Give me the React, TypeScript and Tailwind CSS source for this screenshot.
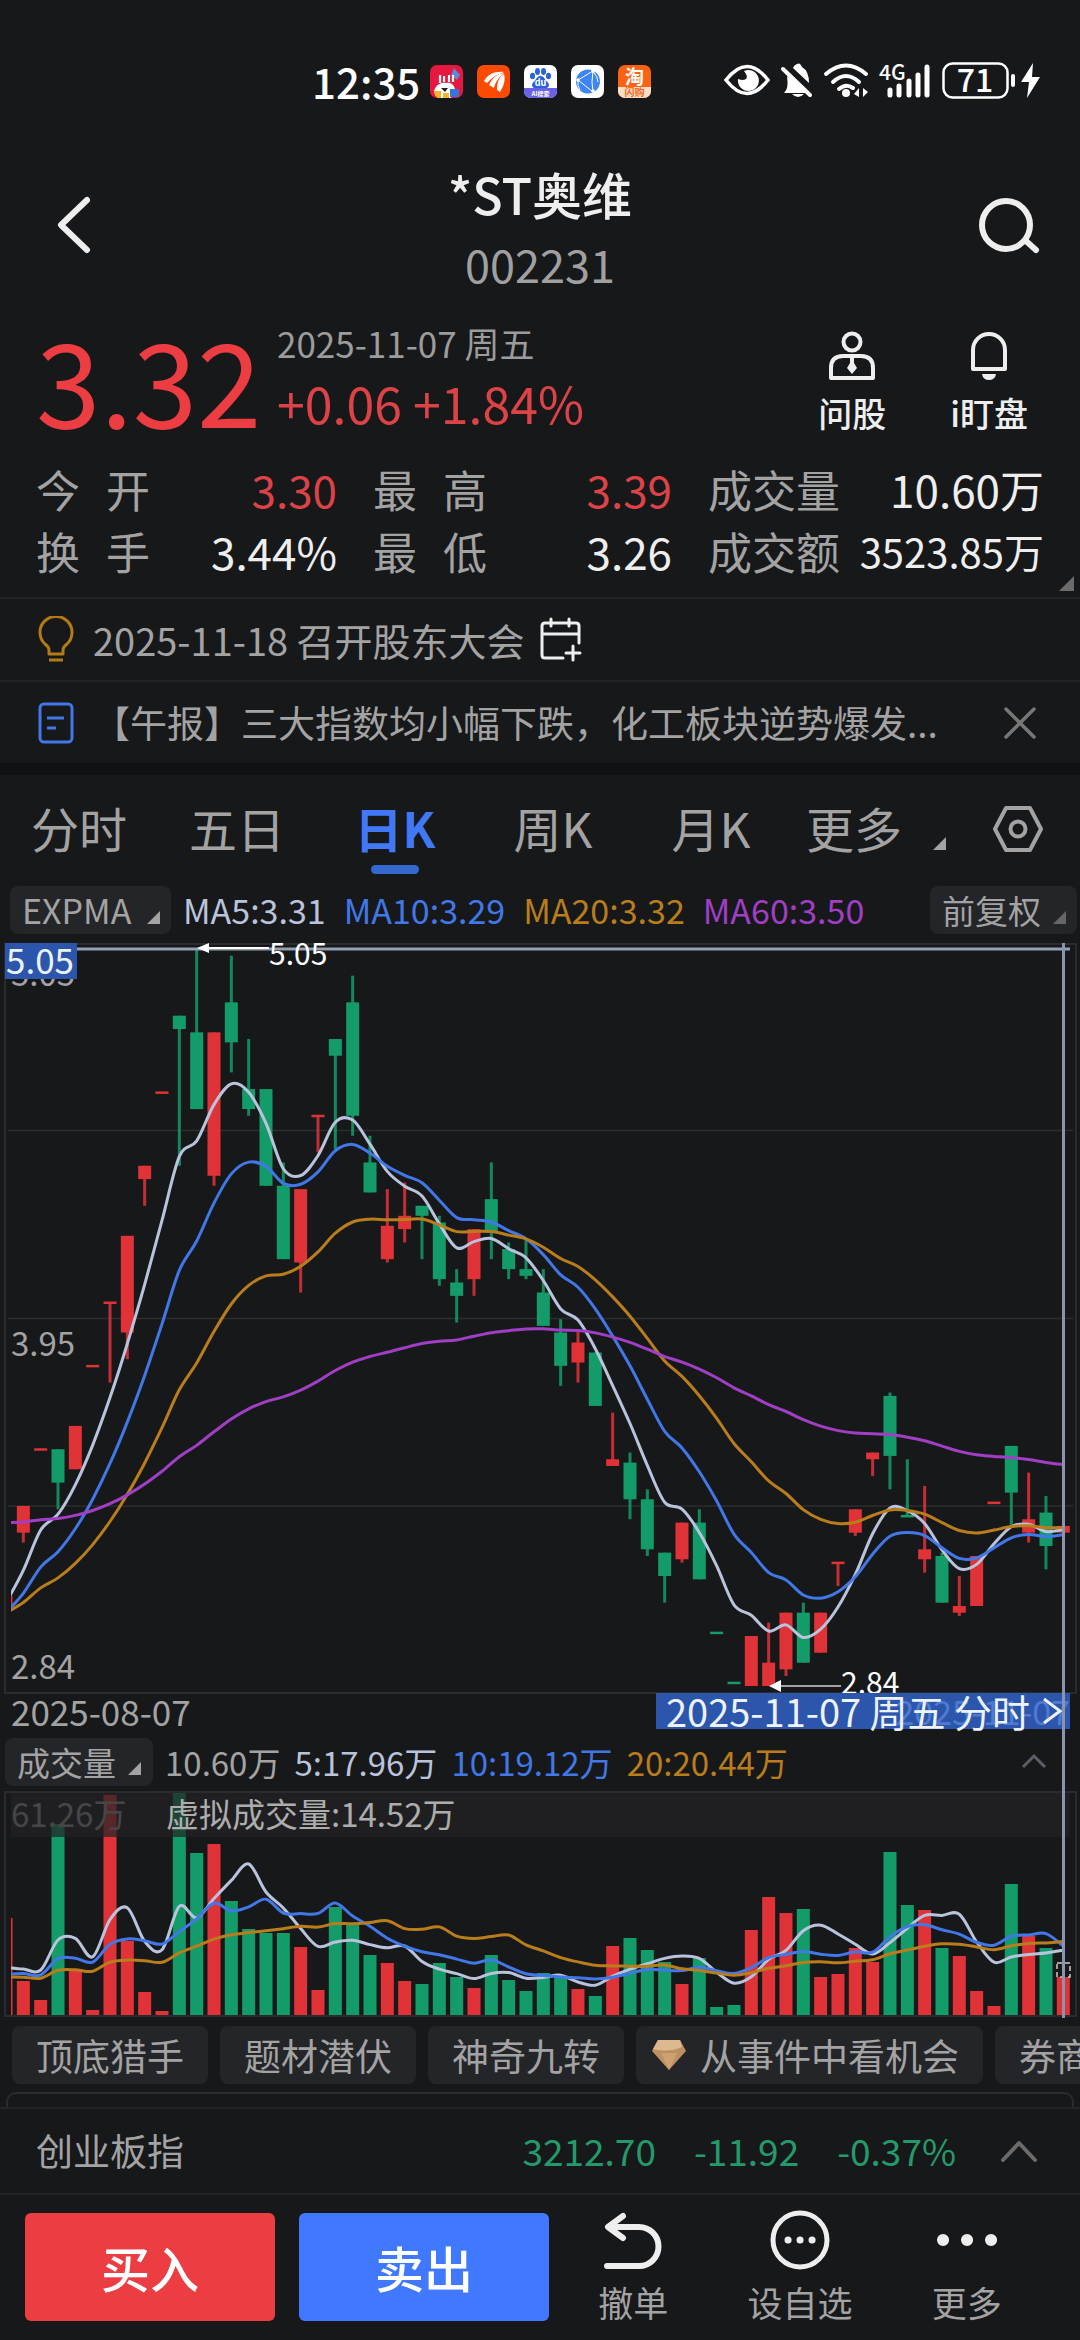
import type { ReactNode } from "react";

type Candle = { up: boolean; high: number; top: number; bottom: number; low: number };

const RED = "#e03338";
const GREEN = "#139c69";
const STEP = 17.333;
const X0 = 6;
const LEFT = 11;
const RIGHT = 1064;
const FONT = '"Noto Sans CJK SC", sans-serif';

// Prices in cents: direction, high, body top, body bottom, low
const ROWS: [string, number, number, number, number][] = [
  ["r", 322, 311, 308, 308],
  ["r", 338, 338, 330, 327],
  ["r", 355, 355, 355, 355],
  ["g", 355, 355, 345, 337],
  ["r", 362, 362, 349, 349],
  ["r", 380, 380, 380, 380],
  ["r", 399, 399, 399, 375],
  ["r", 419, 419, 390, 382],
  ["r", 440, 440, 436, 428],
  ["r", 462, 462, 462, 462],
  ["g", 485, 485, 481, 440],
  ["g", 505, 480, 457, 457],
  ["r", 480, 480, 437, 434],
  ["g", 503, 489, 477, 468],
  ["g", 478, 463, 457, 455],
  ["g", 463, 463, 434, 434],
  ["g", 441, 434, 412, 412],
  ["r", 433, 433, 411, 402],
  ["r", 455, 455, 455, 444],
  ["g", 478, 478, 473, 445],
  ["g", 497, 489, 455, 449],
  ["g", 449, 441, 432, 432],
  ["r", 433, 422, 412, 411],
  ["r", 435, 425, 421, 417],
  ["g", 428, 428, 425, 412],
  ["g", 425, 423, 406, 404],
  ["g", 409, 405, 401, 393],
  ["r", 421, 421, 406, 401],
  ["g", 441, 430, 420, 412],
  ["g", 417, 415, 409, 406],
  ["g", 418, 409, 407, 406],
  ["g", 409, 402, 392, 392],
  ["g", 394, 390, 380, 374],
  ["r", 391, 387, 381, 375],
  ["g", 384, 384, 368, 368],
  ["r", 366, 352, 350, 350],
  ["g", 354, 351, 340, 334],
  ["g", 343, 340, 325, 323],
  ["g", 324, 324, 317, 309],
  ["r", 333, 333, 322, 321],
  ["g", 337, 333, 316, 316],
  ["g", 300, 300, 300, 300],
  ["g", 285, 285, 285, 285],
  ["r", 299, 299, 284, 284],
  ["r", 303, 291, 284, 284],
  ["r", 306, 306, 289, 287],
  ["g", 309, 306, 291, 291],
  ["r", 306, 306, 294, 294],
  ["r", 321, 321, 321, 314],
  ["r", 337, 337, 330, 329],
  ["r", 354, 354, 352, 347],
  ["g", 372, 371, 353, 343],
  ["g", 352, 335, 335, 335],
  ["r", 344, 325, 322, 318],
  ["g", 324, 323, 309, 309],
  ["r", 317, 308, 306, 305],
  ["r", 323, 323, 308, 308],
  ["r", 339, 339, 339, 339],
  ["g", 356, 356, 342, 332],
  ["r", 348, 334, 330, 327],
  ["g", 341, 336, 326, 319],
  ["r", 332, 332, 330, 330],
];

const CANDLES: Candle[] = ROWS.map(([d, high, top, bottom, low]) => ({ up: d === "r", high, top, bottom, low }));
const CLOSES = CANDLES.map((c) => (c.up ? c.top : c.bottom));

// Volume bar heights in chart units
const VOLUME = [
  97, 34, 15, 191, 46, 5, 220, 74, 23, 4, 222, 162, 171, 114, 86, 82, 82, 68, 25, 108, 91, 60, 52, 34, 31, 52, 38, 27,
  60, 35, 24, 42, 38, 26, 19, 69, 77, 65, 53, 31, 57, 8, 10, 85, 118, 102, 106, 38, 41, 67, 53, 163, 110, 105, 67, 59,
  24, 9, 131, 79, 67, 38,
];
const EARLIER_VOLUME = [35, 35, 35, 35, 35, 35, 35, 35, 35, 35, 28, 28, 28, 43, 43, 42, 20, 41, 38];

const xOf = (i: number) => X0 + i * STEP;
const yOf = (price: number) => 6 + (505 - price) * 3.335;

function ema(seed: number, n: number) {
  const out = [seed];
  for (let i = 1; i < CLOSES.length; i++) out.push(out[i - 1] + ((CLOSES[i] - out[i - 1]) * 2) / (n + 1));
  return out;
}

function sma(n: number) {
  const all = [...EARLIER_VOLUME, ...VOLUME];
  return VOLUME.map((_, i) => {
    const end = i + EARLIER_VOLUME.length + 1;
    return all.slice(end - n, end).reduce((a, b) => a + b, 0) / n;
  });
}

function smoothPath(points: [number, number][]) {
  let d = `M${points[0][0]} ${points[0][1].toFixed(1)}`;
  for (let i = 0; i < points.length - 1; i++) {
    const p0 = points[Math.max(i - 1, 0)];
    const p1 = points[i];
    const p2 = points[i + 1];
    const p3 = points[Math.min(i + 2, points.length - 1)];
    d += ` C${(p1[0] + (p2[0] - p0[0]) / 6).toFixed(1)} ${(p1[1] + (p2[1] - p0[1]) / 6).toFixed(1)} ${(p2[0] - (p3[0] - p1[0]) / 6).toFixed(1)} ${(p2[1] - (p3[1] - p1[1]) / 6).toFixed(1)} ${p2[0].toFixed(1)} ${p2[1].toFixed(1)}`;
  }
  return d;
}

const priceLine = (seed: number, n: number) => smoothPath(ema(seed, n).map((p, i) => [xOf(i), yOf(p)]));
const volumeLine = (n: number) => smoothPath(sma(n).map((v, i) => [xOf(i), 224 - v]));

function Corner({ className = "" }: { className?: string }) {
  return (
    <svg viewBox="0 0 12 12" className={className} aria-hidden="true">
      <path d="M12 0V12H0Z" fill="currentColor" />
    </svg>
  );
}

function StatusBar() {
  return (
    <div className="flex h-[162px] items-center pr-[30px] pl-[312px] text-white">
      <span className="text-[42px] leading-none font-medium">12:35</span>
      <div className="ml-[10px] flex gap-[14px]">
        <svg viewBox="0 0 33 33" className="size-[33px]">
          <rect width="33" height="33" rx="7" fill="#e8173f" />
          <path d="M24 3l6 7-3 5-6-5z" fill="#5b8bd6" />
          <path d="M10 10v8M14 11v6M19 10v7M23 10v7" stroke="#fff" strokeWidth="2.2" />
          <path d="M4 26c2-7 8-9 12-8 5-1 8 2 9 6l-4 9H8z" fill="#fff" />
          <path d="M11 23h7l-3 4z" fill="#222" />
          <path d="M4 26h7v7H8q-4-2-4-7zM13 28h6v5h-6z" fill="#f4b62b" />
          <path d="M20 24h9v8h-9z" fill="#3774d8" />
        </svg>
        <svg viewBox="0 0 33 33" className="size-[33px]">
          <rect width="33" height="33" rx="7" fill="#fd4a02" />
          <path d="M7 16C11 9 18 6 27 7 18 10 14 14 10 18zM12 20C15 13 20 9 27 8 21 13 18 18 17 23zM20 25C20 17 22 12 27 9 29 16 26 22 23 27z" fill="#fff" />
        </svg>
        <svg viewBox="0 0 33 33" className="size-[33px] overflow-visible">
          <rect width="33" height="33" rx="7" fill="#fff" />
          <path d="M0 23H33V26a7 7 0 0 1-7 7H7a7 7 0 0 1-7-7z" fill="#6a61e8" />
          <g fill="#2a62dc">
            <ellipse cx="8.500" cy="11" rx="2.500" ry="3.300" />
            <ellipse cx="13.500" cy="6.500" rx="2.500" ry="3.400" />
            <ellipse cx="19.500" cy="6.500" rx="2.500" ry="3.400" />
            <ellipse cx="24.500" cy="11" rx="2.500" ry="3.300" />
            <path d="M16.500 11c4 0 4 4 7 6 3 3 1 7-3 6h-8c-4 1-6-3-3-6 3-2 3-6 7-6z" />
          </g>
          <text x="16.500" y="21" fontSize="9" fontWeight="700" textAnchor="middle" fill="#fff">du</text>
          <text x="16.500" y="31" fontSize="6" fontWeight="700" textAnchor="middle" fill="#fff">AI搜索</text>
        </svg>
        <svg viewBox="0 0 33 33" className="size-[33px]">
          <rect width="33" height="33" rx="7" fill="#fff" />
          <circle cx="17" cy="16.500" r="12" fill="#3d84f5" />
          <g stroke="#fff" strokeWidth="1" fill="none">
            <path d="M7 15L22 6Q20 17 22 27L7 15M22 6q5 6 5 11M7 15q-1 6 2 10" />
          </g>
          <g fill="#fff">
            <circle cx="7" cy="15" r="1.800" />
            <circle cx="22" cy="6" r="1.800" />
            <circle cx="22" cy="26" r="1.800" />
          </g>
        </svg>
        <svg viewBox="0 0 33 33" className="size-[33px] overflow-visible">
          <rect width="33" height="33" rx="7" fill="#fb6312" />
          <path d="M0 22H33V26a7 7 0 0 1-7 7H7a7 7 0 0 1-7-7z" fill="#ffdcc4" />
          <text x="16.500" y="19" fontSize="19" fontWeight="700" textAnchor="middle" fill="#fff">淘</text>
          <text x="16.500" y="31" fontSize="10" fontWeight="700" textAnchor="middle" fill="#f26a1c">闪购</text>
        </svg>
      </div>
      <svg viewBox="716 56 334 50" className="ml-auto h-[50px] w-[334px] overflow-visible" fill="none" stroke="#fff" aria-label="状态图标">
        <path d="M726 80Q747 53 768 80Q747 107 726 80Z" strokeWidth="3.500" />
        <path d="M744 71C750 78 746 82 738 79A10.500 10.500 0 1 0 744 71Z" fill="#fff" stroke="none" />
        <path d="M787 76L808 93H784Q789 89 787 76ZM793 68Q794 65 797 64Q800 62 802 67Q809 71 809 83Z" fill="#fff" stroke="none" />
        <path d="M783 69L810 95" strokeWidth="4" strokeLinecap="round" />
        <path d="M792 94H804Q798 100 792 94Z" fill="#fff" stroke="none" />
        <g strokeWidth="4" strokeLinecap="round">
          <path d="M826 74Q846 57 866 74M833 82Q846 70 859 82M839 89Q846 83 853 88" />
        </g>
        <circle cx="846" cy="93" r="4" fill="#fff" stroke="none" />
        <path d="M859 88V97L854 94ZM863 97V88L868 92Z" fill="#fff" stroke="none" />
        <g strokeWidth="5" strokeLinecap="round">
          <path d="M890 90V95M899 86V95M909 81V95M918 75V95M927 67V95" />
        </g>
        <text x="879" y="80" fontSize="21" fontWeight="500" fill="#fff" stroke="none">4G</text>
        <rect x="943.500" y="63.500" width="64" height="34" rx="9" strokeWidth="2.500" />
        <text x="975" y="92" fontSize="32" fontWeight="500" textAnchor="middle" fill="#fff" stroke="none">71</text>
        <path d="M1013 76V85" strokeWidth="4" strokeLinecap="round" />
        <path d="M1033 63L1021 82H1029L1027 98L1040 77H1032Z" fill="#fff" stroke="none" />
      </svg>
    </div>
  );
}

function Header() {
  return (
    <header className="flex h-[142px] items-start justify-between pr-[39px] pl-[53px]">
      <button aria-label="返回" className="mt-[31px] text-[#eee]">
        <svg viewBox="0 0 44 64" className="h-[64px] w-[44px]" fill="none" stroke="currentColor" strokeWidth="6" strokeLinecap="round" strokeLinejoin="round">
          <path d="M34 7L8 32L34 57" />
        </svg>
      </button>
      <div className="flex flex-col items-center pl-[6px]">
        <h1 className="text-[50px] leading-[62px] font-medium text-[#eee]">*ST奥维</h1>
        <p className="text-[45px] leading-[80px] text-[#a0a0a0]">002231</p>
      </div>
      <button aria-label="搜索" className="mt-[34px] text-[#eee]">
        <svg viewBox="0 0 64 60" className="h-[60px] w-[64px]" fill="none" stroke="currentColor" strokeWidth="6" strokeLinecap="round">
          <circle cx="29" cy="29" r="24" />
          <path d="M49 45L59 54" />
        </svg>
      </button>
    </header>
  );
}

function Quote() {
  return (
    <section className="flex h-[146px] items-start pr-[52px] pl-[36px]">
      <strong className="w-[241px] text-[116px] leading-[146px] font-normal text-[#ec3d42]">3.32</strong>
      <div className="flex flex-col pt-[9px]">
        <time className="text-[35px] leading-[60px] text-[#9c9c9c]">2025-11-07 周五</time>
        <p className="text-[50px] leading-[58px] text-[#dc4347]">+0.06 +1.84%</p>
      </div>
      <div className="ml-auto flex gap-[64px] pt-[26px] text-[#eee]">
        <button className="flex flex-col items-center">
          <svg viewBox="0 0 50 52" className="h-[52px] w-[50px]" fill="none" stroke="currentColor" strokeWidth="4">
            <circle cx="25" cy="12" r="8.500" />
            <path d="M4 48V38Q4 26 16 26H34Q46 26 46 38V48Z" strokeLinejoin="round" />
            <path d="M23 27H27V33L30 38L25 44L20 38L23 33Z" fill="currentColor" stroke="none" />
          </svg>
          <span className="text-[34px] leading-[62px] font-medium">问股</span>
        </button>
        <button className="flex flex-col items-center">
          <svg viewBox="0 0 50 52" className="h-[52px] w-[50px]" fill="none" stroke="currentColor" strokeWidth="4">
            <path d="M9 39V20a16 16 0 0 1 32 0V39Z" strokeLinejoin="round" />
            <path d="M18 44H32Q31 50 25 50Q19 50 18 44Z" fill="currentColor" stroke="none" />
          </svg>
          <span className="text-[34px] leading-[62px] font-medium">i盯盘</span>
        </button>
      </div>
    </section>
  );
}

function Stat({ label, value, tone }: { label: string[]; value: string; tone: string }) {
  return (
    <div className="flex items-center justify-between">
      <dt className={label.length === 2 ? "flex gap-[26px]" : "flex"}>
        {label.map((c) => (
          <span key={c}>{c}</span>
        ))}
      </dt>
      <dd className={tone}>{value}</dd>
    </div>
  );
}

function Stats() {
  return (
    <section className="relative h-[149px] border-b-2 border-[#232427] px-[36px] pt-[8px]">
      <dl className="grid grid-cols-[301fr_299fr_336fr] gap-x-[36px] text-[44px] leading-[62px] text-[#a3a3a3]">
        <Stat label={["今", "开"]} value="3.30" tone="text-[#dc4347]" />
        <Stat label={["最", "高"]} value="3.39" tone="text-[#dc4347]" />
        <Stat label={["成", "交", "量"]} value="10.60万" tone="text-[#eee]" />
        <Stat label={["换", "手"]} value="3.44%" tone="text-[#eee]" />
        <Stat label={["最", "低"]} value="3.26" tone="text-[#eee]" />
        <Stat label={["成", "交", "额"]} value="3523.85万" tone="text-[40px] text-[#eee]" />
      </dl>
      <Corner className="absolute right-[6px] bottom-[6px] size-[15px] text-[#6b6b6b]" />
    </section>
  );
}

function News() {
  return (
    <section className="text-[37px] text-[#a3a3a3]">
      <a href="#meeting" className="flex h-[83px] items-center border-b-2 border-[#232427] pl-[36px]">
        <svg viewBox="0 0 40 48" className="h-[48px] w-[40px]" fill="none" stroke="#b37a16" strokeWidth="3">
          <path d="M13 38V34Q13 31 9 28A16 16 0 1 1 31 28Q27 31 27 34V38ZM13 44H27" strokeLinejoin="round" />
        </svg>
        <span className="ml-[17px] text-[38px]">2025-11-18 召开股东大会</span>
        <svg viewBox="0 0 44 46" className="ml-[14px] h-[46px] w-[44px]" fill="none" stroke="#eee" strokeWidth="3" strokeLinecap="round" strokeLinejoin="round">
          <path d="M24 41H6Q3 41 3 38V9Q3 6 6 6H37Q40 6 40 9V26M3 17H40M12 2V9M30 2V9M34 29V43M27 36H41" />
        </svg>
      </a>
      <div className="flex h-[81px] items-center pr-[40px] pl-[36px]">
        <svg viewBox="0 0 40 44" className="h-[44px] w-[40px]" fill="none" stroke="#4277e8" strokeWidth="3">
          <rect x="4" y="3" width="32" height="38" rx="4" />
          <path d="M11 17H28M11 27H20" />
        </svg>
        <a href="#news" className="ml-[17px]">【午报】三大指数均小幅下跌，化工板块逆势爆发...</a>
        <button aria-label="关闭" className="ml-auto">
          <svg viewBox="0 0 40 40" className="size-[40px]" fill="none" stroke="#777" strokeWidth="3.500" strokeLinecap="round">
            <path d="M6 6L34 34M34 6L6 34" />
          </svg>
        </button>
      </div>
      <div className="h-[12px] bg-[#101112]" />
    </section>
  );
}

const TABS = ["分时", "五日", "日K", "周K", "月K"];

function Tabs() {
  return (
    <nav className="flex h-[108px] items-stretch pr-[36px] text-[48px] text-[#a3a3a3]">
      {TABS.map((t) => (
        <button key={t} className={t === "日K" ? "relative w-[158px] pb-[4px] font-bold text-[#4277f5]" : "w-[158px] pb-[4px]"}>
          {t}
          {t === "日K" && <span className="absolute bottom-[9px] left-1/2 h-[9px] w-[48px] -translate-x-1/2 rounded-full bg-[#3468cf]" />}
        </button>
      ))}
      <button className="ml-[16px] flex items-center pb-[4px]">
        更多
        <Corner className="mt-[32px] ml-[31px] size-[13px]" />
      </button>
      <button aria-label="设置" className="ml-auto">
        <svg viewBox="0 0 52 50" className="h-[50px] w-[52px]" fill="none" stroke="currentColor" strokeWidth="4" strokeLinejoin="round">
          <path d="M14 4H38L49 25L38 46H14L3 25Z" />
          <circle cx="26" cy="25" r="7.500" />
        </svg>
      </button>
    </nav>
  );
}

function Indicators() {
  return (
    <div className="flex h-[60px] items-start gap-[18px] pt-[3px] pr-[3px] pl-[10px] text-[34px] leading-[48px]">
      <button className="-mr-[6px] flex h-[48px] w-[161px] items-center justify-between rounded-[8px] bg-[#242528] pr-[11px] pl-[12px] text-[#a3a3a3]">
        EXPMA
        <Corner className="mt-[14px] size-[13px]" />
      </button>
      <span className="text-[#b9c4dc]">MA5:3.31</span>
      <span className="text-[#4277e8]">MA10:3.29</span>
      <span className="text-[#b97d1c]">MA20:3.32</span>
      <span className="text-[#a03fc4]">MA60:3.50</span>
      <button className="ml-auto flex h-[48px] w-[147px] items-center justify-between rounded-[8px] bg-[#242528] pr-[11px] pl-[12px] text-[33px] text-[#a3a3a3]">
        前复权
        <Corner className="mt-[14px] size-[13px] text-[#666]" />
      </button>
    </div>
  );
}

function PriceChart() {
  return (
    <svg viewBox="0 0 1080 790" className="block w-full" fontFamily={FONT} fontSize="33" role="img" aria-label="日K线图">
      <defs>
        <clipPath id="plot">
          <rect x={LEFT} y="0" width={1070 - LEFT} height="756" />
        </clipPath>
        <clipPath id="lines">
          <rect x={LEFT} y="0" width={RIGHT - LEFT} height="756" />
        </clipPath>
      </defs>
      <rect x="5" y="1" width="1071" height="749" fill="none" stroke="#2a2b2e" strokeWidth="2" />
      <g stroke="#2c2d2f" strokeWidth="1.500">
        <path d="M8 187.500H1073M8 375.500H1073M8 563H1073" />
      </g>
      <g fill="#a3a3a3">
        <text x="11" y="43">5.05</text>
        <text x="11" y="413">3.95</text>
        <text x="11" y="736">2.84</text>
        <text x="11" y="783" fontSize="35">2025-08-07</text>
      </g>
      <g clipPath="url(#plot)">
        {CANDLES.map((c, i) => {
          const x = xOf(i);
          const flat = c.top === c.bottom;
          const bodyTop = yOf(c.top) - (flat ? 1 : 0);
          const bodyHeight = flat ? 2.5 : yOf(c.bottom) - yOf(c.top);
          return (
            <g key={i} fill={c.up ? RED : GREEN}>
              <rect x={x - 1.5} y={yOf(c.high)} width="3" height={yOf(c.low) - yOf(c.high)} opacity="0.850" />
              <rect x={x - 6.5} y={bodyTop} width="13" height={bodyHeight} />
            </g>
          );
        })}
      </g>
      <g clipPath="url(#lines)" fill="none" strokeWidth="3">
        <path d={priceLine(309, 5)} stroke="#b9c4dc" />
        <path d={priceLine(306, 10)} stroke="#4277e8" />
        <path d={priceLine(306, 20)} stroke="#b97d1c" />
        <path d={priceLine(333, 60)} stroke="#a03fc4" />
      </g>
      <path d="M6 6H1070" stroke="#96a0b3" strokeWidth="3" />
      <rect x="5" y="0" width="72" height="36" fill="#2c56ab" />
      <text x="6" y="31" fontSize="35" fill="#edf2ff">5.05</text>
      <g fill="#fff" fontSize="30">
        <path d="M197 5L209 0V10Z" />
        <rect x="209" y="4" width="60" height="2" />
        <text x="269" y="22">5.05</text>
        <path d="M769 743L781 737V749Z" />
        <rect x="781" y="742" width="60" height="2" opacity="0.600" />
        <text x="841" y="751">2.84</text>
      </g>
    </svg>
  );
}

function VolumeChart() {
  return (
    <svg viewBox="0 0 1080 227" className="block w-full" fontFamily={FONT} fontSize="33" role="img" aria-label="成交量图">
      <defs>
        <clipPath id="volume">
          <rect x={LEFT} y="2" width={1070 - LEFT} height="223" />
        </clipPath>
        <clipPath id="volumeLines">
          <rect x={LEFT} y="2" width={RIGHT - LEFT} height="223" />
        </clipPath>
      </defs>
      <rect x="5" y="1" width="1071" height="224" fill="none" stroke="#2a2b2e" strokeWidth="2" />
      <g clipPath="url(#volume)">
        {VOLUME.map((v, i) => (
          <rect key={i} x={xOf(i) - 6.5} y={224 - v} width="13" height={v} fill={CANDLES[i].up ? RED : GREEN} />
        ))}
      </g>
      <text x="11" y="36" fill="#a3a3a3">61.26万</text>
      <rect x={LEFT} y="2" width="1059" height="44" fill="#222326" opacity="0.720" />
      <text x="166" y="36" fill="#adadad">虚拟成交量:14.52万</text>
      <g clipPath="url(#volumeLines)" fill="none" strokeWidth="3">
        <path d={volumeLine(5)} stroke="#b9c4dc" />
        <path d={volumeLine(10)} stroke="#4277e8" />
        <path d={volumeLine(20)} stroke="#b97d1c" />
      </g>
      <rect x="1057" y="172" width="13" height="14" fill="none" stroke="#ccc" strokeWidth="1.500" strokeDasharray="5 3" />
    </svg>
  );
}

function Charts() {
  return (
    <section className="relative">
      <PriceChart />
      <button className="absolute top-[750px] right-[10px] flex h-[36px] w-[414px] items-center justify-between bg-[#2c56ab] pr-[8px] pl-[10px] text-[38px] leading-[36px] whitespace-nowrap text-[#edf2ff]">
        <span aria-hidden="true" className="absolute right-0 text-[34px] text-[#4f7ad2]">2025-11-07</span>
        <span className="relative">2025-11-07 周五 分时</span>
        <svg viewBox="0 0 20 28" className="relative h-[28px] w-[20px]" fill="none" stroke="currentColor" strokeWidth="3">
          <path d="M2 2L18 14L2 26" />
        </svg>
      </button>
      <div className="flex h-[58px] items-start gap-[14px] pt-[5px] pl-[5px] text-[33px] leading-[48px]">
        <button className="-mr-[2px] flex h-[48px] w-[148px] items-center justify-between rounded-[8px] bg-[#242528] px-[12px] text-[#a3a3a3]">
          成交量
          <Corner className="mt-[12px] size-[13px]" />
        </button>
        <span className="text-[#a3a3a3]">10.60万</span>
        <span className="text-[#b9c4dc]">5:17.96万</span>
        <span className="text-[#4277e8]">10:19.12万</span>
        <span className="text-[#b97d1c]">20:20.44万</span>
        <button aria-label="收起" className="mt-[14px] mr-[32px] ml-auto">
          <svg viewBox="0 0 28 18" className="h-[18px] w-[28px]" fill="none" stroke="#5c5d66" strokeWidth="3">
            <path d="M3 15L14 4L25 15" />
          </svg>
        </button>
      </div>
      <VolumeChart />
      <div className="absolute inset-y-0 left-[98.3%] w-[3px] bg-[#8c94ad]" />
    </section>
  );
}

function Chip({ children }: { children: ReactNode }) {
  return <button className="flex h-[58px] shrink-0 items-center rounded-[8px] bg-[#242528] px-[24px] text-[37px] leading-[58px] whitespace-nowrap">{children}</button>;
}

function Chips() {
  return (
    <section className="overflow-hidden">
      <div className="flex gap-[12px] pt-[8px] pl-[12px] text-[#a3a3a3]">
        <Chip>顶底猎手</Chip>
        <Chip>题材潜伏</Chip>
        <Chip>神奇九转</Chip>
        <Chip>
          <svg viewBox="0 0 36 32" className="-ml-[9px] mr-[13px] h-[32px] w-[36px]">
            <path d="M7 1H29L35 12L18 31L1 12Z" fill="#bd9062" />
            <path d="M7 1H29L31 8Q18 14 2 10Z" fill="#dcb98e" />
            <path d="M10 14H26L18 31Z" fill="#cda172" />
          </svg>
          从事件中看机会
        </Chip>
        <Chip>券商</Chip>
      </div>
      <div className="mx-[6px] mt-[8px] h-[15px] rounded-t-[10px] border-2 border-b-0 border-[#2a2b2e]" />
    </section>
  );
}

function IndexRow() {
  return (
    <section className="flex h-[88px] items-center border-y-2 border-[#232427] pr-[41px] pl-[36px] text-[37px] text-[#249a6c]">
      <span className="mr-auto text-[#a3a3a3]">创业板指</span>
      <span>3212.70</span>
      <span className="ml-[38px]">-11.92</span>
      <span className="ml-[38px]">-0.37%</span>
      <button aria-label="展开指数" className="ml-[43px]">
        <svg viewBox="0 0 40 26" className="h-[26px] w-[40px]" fill="none" stroke="#6b6b6b" strokeWidth="4" strokeLinecap="round" strokeLinejoin="round">
          <path d="M4 22L20 5L36 22" />
        </svg>
      </button>
    </section>
  );
}

function Action({ label, children }: { label: string; children: ReactNode }) {
  return (
    <button className="flex flex-1 flex-col items-center text-[#a3a3a3]">
      <svg viewBox="0 0 64 64" className="size-[64px] text-[#eee]" fill="none" stroke="currentColor" strokeWidth="6" strokeLinecap="round" strokeLinejoin="round">
        {children}
      </svg>
      <span className="text-[35px] leading-[60px]">{label}</span>
    </button>
  );
}

function Actions() {
  return (
    <footer className="flex items-start pt-[13px] pr-[30px] pb-[4px] pl-[25px]">
      <button className="mt-[5px] h-[108px] w-[250px] rounded-[6px] bg-[#ec3d42] text-[49px] font-medium text-white">买入</button>
      <button className="mt-[5px] mr-[1px] ml-[24px] h-[108px] w-[250px] rounded-[6px] bg-[#4079ff] text-[49px] font-medium text-white">卖出</button>
      <Action label="撤单">
        <path d="M22 8L7 19L22 30M8 19H38A19 19 0 0 1 38 58H6" />
      </Action>
      <Action label="设自选">
        <circle cx="32" cy="32" r="27" strokeWidth="5" />
        <path d="M20 32H20.100M32 32H32.100M44 32H44.100" strokeWidth="7" />
      </Action>
      <Action label="更多">
        <path d="M8 32H8.100M32 32H32.100M56 32H56.100" strokeWidth="12" />
      </Action>
    </footer>
  );
}

export default function App() {
  return (
    <main className='min-h-screen overflow-hidden bg-[#17181a] font-["Noto_Sans_CJK_SC",sans-serif]'>
      <StatusBar />
      <Header />
      <Quote />
      <Stats />
      <News />
      <Tabs />
      <Indicators />
      <Charts />
      <Chips />
      <IndexRow />
      <Actions />
    </main>
  );
}
